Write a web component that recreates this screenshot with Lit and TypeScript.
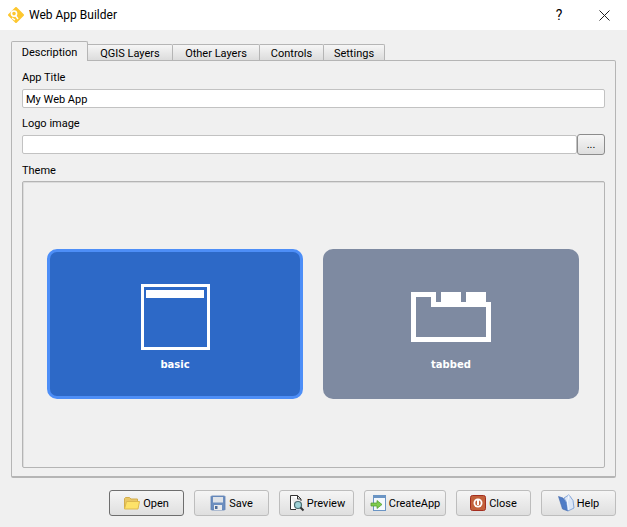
import { LitElement, html, css, svg } from "lit";
import { customElement } from "lit/decorators.js";

const logo = svg`<svg class="ico" width="16" height="16" viewBox="0 0 16 16"><path d="M8 1 15 8 8 15 1 8Z" fill="#fdc72f" stroke="#fdc72f" stroke-width="2" stroke-linejoin="round"/><circle cx="6" cy="6.600" r="2.600" fill="none" stroke="#fff" stroke-width="1.600"/><path d="M7.500 8.500 10 12M4 11l3 2" stroke="#fff" stroke-width="1.500" fill="none"/></svg>`;
const open = svg`<svg width="16" height="16" viewBox="0 0 16 16"><path d="M.5 13.500V3.500l1-1h4l1.500 1.500h6.500v2" fill="#e9c766" stroke="#d3ad4c"/><path d="M.5 14 2.500 6.500H15.500L14 14Z" fill="#fde269" stroke="#dcb850" stroke-linejoin="round"/></svg>`;
const save = svg`<svg width="16" height="16" viewBox="0 0 16 16"><path d="M1 1.500 1.500 1h13l.5.5v13l-.5.5H1.500l-.5-.5Z" fill="#6c8ebf" stroke="#5b7fb4" stroke-width=".8"/><rect x="3" y="2" width="10" height="5.500" fill="#dfe3e8"/><rect x="4" y="10" width="8" height="5" fill="#e8eaec"/><rect x="5" y="11" width="2.500" height="3" fill="#4e6c99"/></svg>`;
const preview = svg`<svg width="18" height="18" viewBox="0 0 18 18"><path d="M2.500 1.500h7l3.500 3.500v2M8 15.500H2.500v-14M9.500 1.500V5H13" fill="#fff" stroke="#333" stroke-width="1"/><circle cx="10" cy="11" r="3.500" fill="#9fd3d8" stroke="#4a6b70" stroke-width="1.200"/><path d="m12.500 13.500 3 3" stroke="#333" stroke-width="2"/></svg>`;
const create = svg`<svg width="18" height="18" viewBox="0 0 18 18"><rect x="3.500" y="1.500" width="12" height="15" fill="#f4f8fc" stroke="#6a94c4"/><rect x="4" y="2" width="11" height="2" fill="#6a94c4"/><path d="M1 9h6V6.500l5 4-5 4V12H1Z" fill="#7fcb4e" stroke="#4d9a2c" stroke-width=".7"/></svg>`;
const close = svg`<svg width="16" height="16" viewBox="0 0 16 16"><rect x=".5" y=".5" width="15" height="15" rx="2" fill="#c2613b" stroke="#a32d1f"/><circle cx="8" cy="8" r="4.500" fill="#fff" /><circle cx="8" cy="8" r="2.700" fill="#c2613b"/><rect x="7" y="4" width="2" height="6" fill="#fff"/></svg>`;
const help = svg`<svg width="18" height="18" viewBox="0 0 18 18"><path d="M.5 2.500 5 4l3.500 4.500L10 17 4.500 15Z" fill="#4f7cc6" stroke="#3f67ab" stroke-width=".6"/><path d="M6 4 11 .8 15 6.500l1 7.500-6 3L8.500 8.500Z" fill="#dbe6f7" stroke="#6f95d2" stroke-width=".8"/><path d="M11 1 9.500 8l.8 8" fill="none" stroke="#f7faff" stroke-width="1"/></svg>`;

@customElement("app-root")
export class AppRoot extends LitElement {
  static styles = css`
    :host {
      display: flex;
      flex-direction: column;
      width: 627px;
      height: 527px;
      background: #f0f0f0;
      font-family: Roboto, "Noto Sans", sans-serif;
      font-size: 11px;
      color: #000;
      overflow: hidden;
    }
    .title {
      height: 30px;
      background: #fff;
      display: flex;
      align-items: center;
      padding-left: 8px;
      font-size: 12px;
      flex: none;
    }
    .ico { margin-right: 5px; }
    .title .name { flex: 1; }
    .help { font-size: 14px; width: 46px; text-align: center; padding-left: 2px; box-sizing: border-box; }
    .x { width: 46px; height: 30px; display: flex; align-items: center; justify-content: center; }
    .body { padding: 11px 11px 0; display: flex; flex-direction: column; }
    .tabs { display: flex; align-items: flex-end; height: 19px; position: relative; z-index: 1; }
    .tab {
      height: 16px;
      box-sizing: border-box;
      border: 1px solid #b5b5b5;
      border-left: none;
      border-bottom: none;
      border-radius: 0 2px 0 0;
      background: linear-gradient(#f6f6f6, #dcdcdc);
      display: flex;
      align-items: center;
      justify-content: center;
      padding-top: 1px;
    }
    .tab.sel {
      height: 20px;
      margin-bottom: -1px;
      background: #f0f0f0;
      border-left: 1px solid #b5b5b5;
      border-radius: 2px 2px 0 0;
      padding-top: 1px;
      padding-bottom: 0;
    }
    .pane {
      height: 418px;
      box-sizing: border-box;
      border: 1px solid #b5b5b5;
      border-bottom: 2px solid #b5b5b5;
      border-radius: 0 2px 2px 2px;
      padding: 10px;
      display: flex;
      flex-direction: column;
    }
    label { line-height: 13px; display: block; flex: none; }
    .input {
      height: 19px;
      flex: none;
      box-sizing: border-box;
      background: #fff;
      border: 1px solid #c2c2c2;
      border-radius: 2px;
      padding-left: 3px;
      line-height: 19px;
    }
    .logo { display: flex; align-items: center; flex: none; }
    .logo .input { flex: 1; }
    .dots {
      width: 28px;
      height: 21px;
      box-sizing: border-box;
      border: 1px solid #8c8c8c;
      border-radius: 3px;
      background: linear-gradient(#f6f6f6, #dedede);
      text-align: center;
      line-height: 19px;
    }
    .l1 { height: 18px; }
    .l2 { margin-top: 9px; height: 17px; }
    .l3 { margin-top: 9px; height: 17px; }
    .theme {
      height: 287px;
      flex: none;
      box-sizing: border-box;
      border: 1px solid #b4b4b4;
      box-shadow: inset 1px 1px 0 #dcdcdc;
      border-radius: 2px;
      display: flex;
      align-items: center;
      justify-content: center;
      gap: 20px;
      padding: 0 1px 1px 0;
    }
    .card {
      width: 256px;
      height: 150px;
      box-sizing: border-box;
      border-radius: 10px;
      display: flex;
      flex-direction: column;
      align-items: center;
      color: #fff;
      font-family: "DejaVu Sans", sans-serif;
      font-weight: 700;
      font-size: 10px;
      line-height: 14px;
    }
    .basic { background: #2d69c7; border: 3px solid #4d8ef7; padding-top: 32px; }
    .tabbed { background: #7e8aa1; padding-top: 43px; }
    .basic span { margin-top: 8px; }
    .basic svg { margin-left: 1px; }
    .tabbed span { margin-top: 16px; }
    .card svg { display: block; }
    .btns { display: flex; justify-content: flex-end; gap: 10px; margin-top: 12px; }
    .btn {
      width: 75px;
      height: 26px;
      box-sizing: border-box;
      border: 1px solid #bdbdbd;
      border-radius: 3px;
      background: linear-gradient(#f5f5f5, #dfdfdf);
      display: flex;
      align-items: center;
      justify-content: center;
      gap: 3px;
    }
    .btn.tight { gap: 1px; }
    .btn.def { border-color: #6e6e6e; }
    .btn.w { width: 82px; }
  `;

  render() {
    const tabs = [["QGIS Layers", 85], ["Other Layers", 87], ["Controls", 64], ["Settings", 61]] as const;
    const btns = [
      ["Open", open, "def"], ["Save", save, ""], ["Preview", preview, "tight"],
      ["CreateApp", create, "w tight"], ["Close", close, ""], ["Help", help, "tight"],
    ] as const;
    return html`
      <div class="title">${logo}<span class="name">Web App Builder</span>
        <span class="help">?</span>
        <span class="x"><svg width="11" height="11" viewBox="0 0 11 11"><path d="M.5.5l10 10M10.500.5l-10 10" stroke="#222" fill="none"/></svg></span>
      </div>
      <div class="body">
        <div class="tabs">
          <div class="tab sel" style="width:77px">Description</div>
          ${tabs.map(([t, w]) => html`<div class="tab" style="width:${w}px">${t}</div>`)}
        </div>
        <div class="pane">
          <label class="l1">App Title</label>
          <div class="input">My Web App</div>
          <label class="l2">Logo image</label>
          <div class="logo"><div class="input"></div><div class="dots">...</div></div>
          <label class="l3">Theme</label>
          <div class="theme">
            <div class="card basic">
              <svg width="69" height="66" viewBox="0 0 69 66"><rect x="1.500" y="1.500" width="66" height="63" fill="none" stroke="#fff" stroke-width="3"/><rect x="5" y="6" width="58" height="8" fill="#fff"/></svg>
              <span>basic</span>
            </div>
            <div class="card tabbed">
              <svg width="80" height="50" viewBox="0 0 80 50"><path fill-rule="evenodd" fill="#fff" d="M0 0H25V10H30V0H50V10H55V0H75V10H80V50H0ZM5 5V45H75V15H20V5Z"/></svg>
              <span>tabbed</span>
            </div>
          </div>
        </div>
        <div class="btns">
          ${btns.map(([t, i, c]) => html`<div class="btn ${c}">${i}<span>${t}</span></div>`)}
        </div>
      </div>
    `;
  }
}
